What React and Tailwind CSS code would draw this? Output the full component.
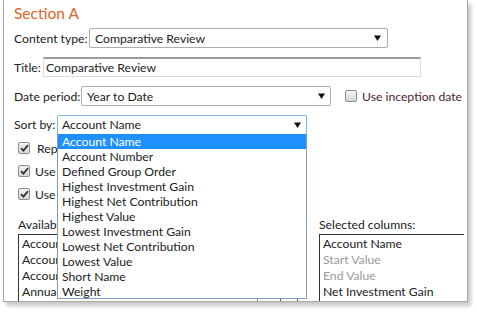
import React from "react";

const font = { fontFamily: 'Lato, "Noto Sans", sans-serif' };

function Arrow() {
  return (
    <svg width="7" height="6" viewBox="0 0 7 6" className="shrink-0">
      <path d="M0 0.5 H7 L3.5 6 Z" fill="#111" />
    </svg>
  );
}

function Check({ checked = true }) {
  return (
    <div className="w-[12px] h-[12px] shrink-0 rounded-[2px] border border-[#8f8f8f] bg-gradient-to-b from-[#f4f4f4] to-[#d6d6d6] flex items-center justify-center">
      {checked && (
        <svg width="9" height="8" viewBox="0 0 9 8">
          <path d="M1 4.2 L3.4 6.6 L8 1.2" stroke="#333" strokeWidth="1.8" fill="none" />
        </svg>
      )}
    </div>
  );
}

const sortItems = [
  "Account Name",
  "Account Number",
  "Defined Group Order",
  "Highest Investment Gain",
  "Highest Net Contribution",
  "Highest Value",
  "Lowest Investment Gain",
  "Lowest Net Contribution",
  "Lowest Value",
  "Short Name",
  "Weight",
];

export default function App() {
  return (
    <div className="w-[477px] h-[317px] bg-white overflow-hidden text-[12.2px] text-[#222] leading-[15px] whitespace-nowrap" style={font}>
      <div className="relative ml-[3px] w-[465px] h-[302px] bg-white border-l border-r border-b border-[#a8a8a8] shadow-[3px_4px_4px_rgba(0,0,0,0.22)] overflow-hidden pl-[10px]">
        {/* Section header */}
        <div className="h-[28px] pt-[4px] text-[15.5px] leading-[18px] text-[#e2622c]">Section A</div>

        {/* Content type */}
        <div className="h-[29px] flex items-start">
          <div className="w-[75px] shrink-0 h-[20px] flex items-center">Content type:</div>
          <div className="w-[299px] shrink-0 h-[20px] border border-[#acacac] rounded-[2px] flex items-center justify-between pl-[5px] pr-[6px]">
            <span>Comparative Review</span>
            <Arrow />
          </div>
        </div>

        {/* Title */}
        <div className="h-[29px] flex items-start">
          <div className="w-[29px] shrink-0 h-[20px] flex items-center">Title:</div>
          <div className="w-[378px] shrink-0 h-[20px] border border-[#dcdcdc] border-t-2 border-t-[#9a9a9a] flex items-center pl-[2px]">
            <span>Comparative Review</span>
          </div>
        </div>

        {/* Date period */}
        <div className="h-[29px] flex items-start">
          <div className="w-[67px] shrink-0 h-[20px] flex items-center">Date period:</div>
          <div className="w-[250px] shrink-0 h-[20px] border border-[#acacac] rounded-[2px] flex items-center justify-between pl-[5px] pr-[5px]">
            <span>Year to Date</span>
            <Arrow />
          </div>
          <div className="ml-[14px] h-[20px] flex items-center gap-[5px]">
            <Check checked={false} />
            <span className="text-[#4f2231]">Use inception date</span>
          </div>
        </div>

        {/* Sort by */}
        <div className="h-[27px] flex items-start">
          <div className="w-[43px] shrink-0 h-[19px] flex items-center">Sort by:</div>
          <div className="w-[250px] shrink-0 h-[19px] border border-[#7eb4ea] rounded-[2px] flex items-center justify-between pl-[4px] pr-[5px]">
            <span>Account Name</span>
            <Arrow />
          </div>
        </div>

        {/* checkboxes (their labels run under the open dropdown) */}
        <div className="flex flex-col gap-[11px] pl-[4px] w-[43px] overflow-hidden">
          <div className="h-[12px] flex items-center gap-[7px]">
            <Check />
            <span>Rep</span>
          </div>
          <div className="h-[12px] flex items-center gap-[5px]">
            <Check />
            <span>Use</span>
          </div>
          <div className="h-[12px] flex items-center gap-[5px]">
            <Check />
            <span>Use</span>
          </div>
        </div>

        {/* columns */}
        <div className="mt-[17px] flex">
          <div className="w-[305px] shrink-0 pl-[4px]">
            <div className="h-[15px] w-[39px] overflow-hidden">Available columns:</div>
            <div className="mt-[2px] w-[39px] h-[80px] overflow-hidden border-l border-t border-[#333] pl-[3px] pt-[1px] leading-[16px]">
              <div>Account Name</div>
              <div>Account Number</div>
              <div>Account Type</div>
              <div>Annual Return</div>
              <div>Annualized Gross TWR</div>
            </div>
          </div>
          <div className="shrink-0">
            <div className="h-[15px]">Selected columns:</div>
            <div className="mt-[2px] w-[145px] h-[80px] border-t border-l border-[#333] pl-[3px] pt-[1px] leading-[16px]">
              <div>Account Name</div>
              <div className="text-[#9a9a9a]">Start Value</div>
              <div className="text-[#9a9a9a]">End Value</div>
              <div>Net Investment Gain</div>
            </div>
          </div>
        </div>

        {/* small controls peeking out below the dropdown */}
        <div className="absolute left-[236px] top-[297px] w-[14px] h-[1px] bg-[#aaa]" />
        <div className="absolute left-[253px] top-[296px] w-[1px] h-[6px] bg-[#888]" />
        <div className="absolute left-[276px] top-[296px] w-[18px] h-[12px] rounded-[3px] border border-[#555] bg-white" />

        {/* Dropdown list */}
        <div className="absolute left-[53px] top-[133px] w-[250px] h-[166px] bg-white border border-[#7f9db9] border-t-0 pt-[1px]">
          {sortItems.map((it, i) => (
            <div
              key={it}
              className={
                "h-[15px] pl-[4px] flex items-center " +
                (i === 0 ? "bg-[#1e90ff] text-white" : "")
              }
            >
              {it}
            </div>
          ))}
        </div>
      </div>
    </div>
  );
}
